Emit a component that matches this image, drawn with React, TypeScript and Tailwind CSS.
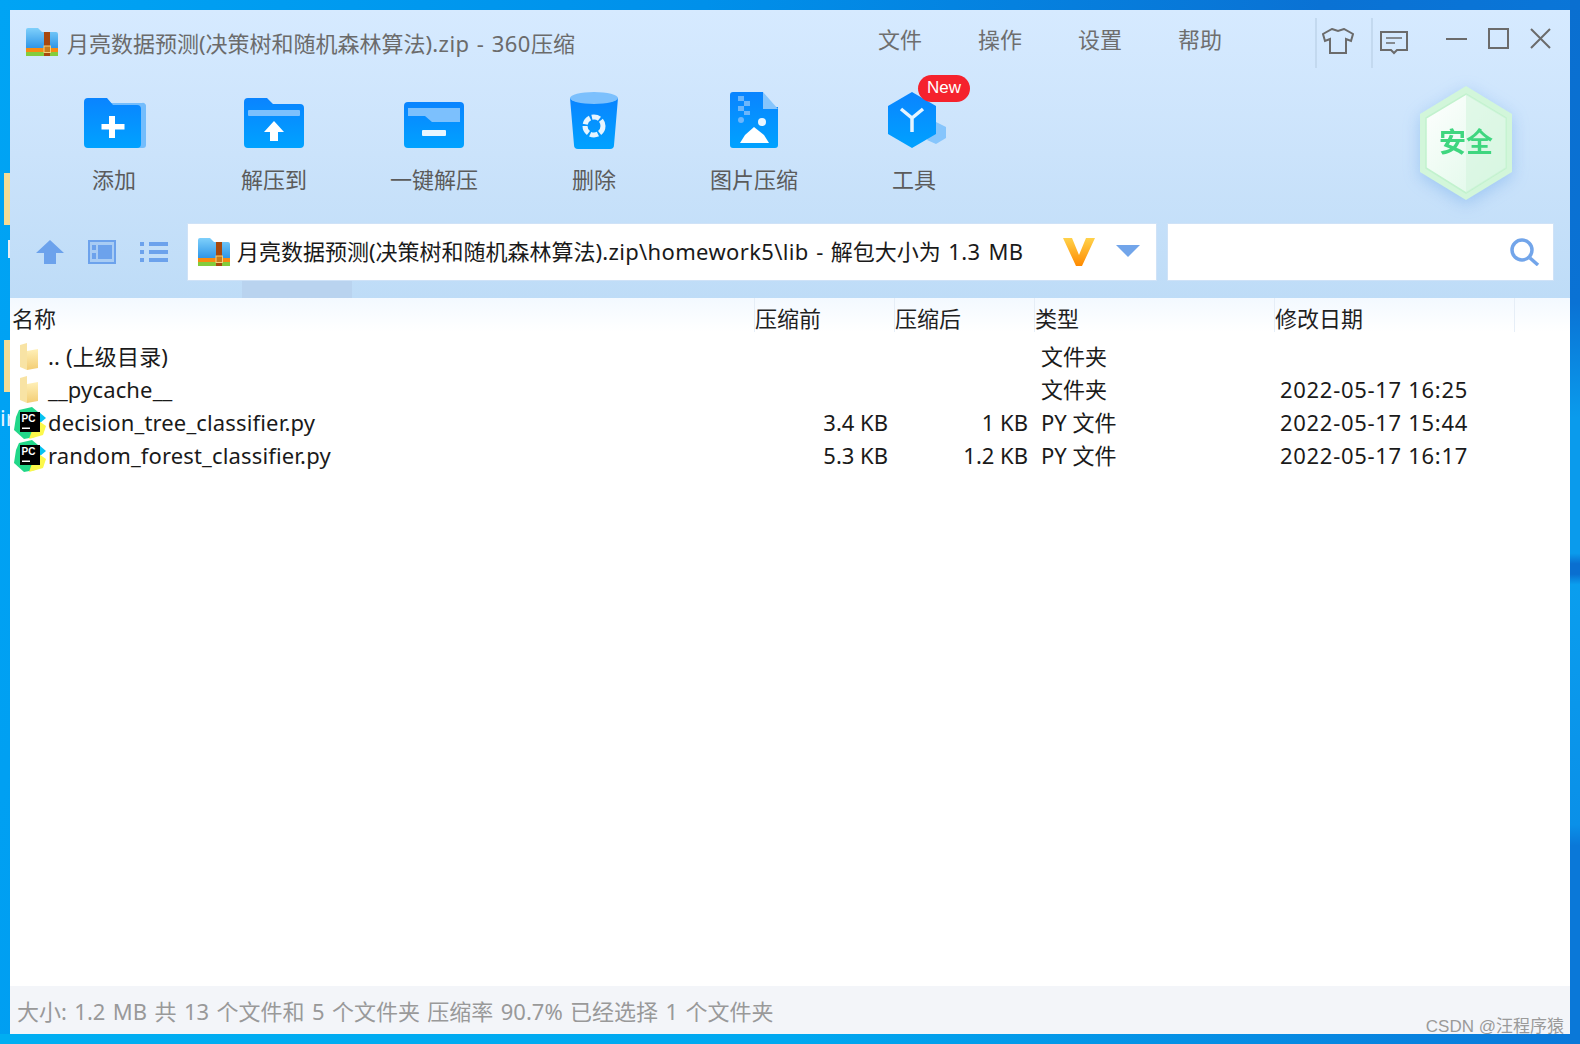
import React from "react";

const CJK = "font-['Segoe_UI','Noto_Sans','Noto_Sans_CJK_SC',sans-serif]";

function ArchiveIcon({ className, id }: { className: string; id: string }) {
  return (
    <svg viewBox="0 0 32 28" className={className}>
      <defs>
        <linearGradient id={id} x1="0" y1="0" x2="0" y2="1">
          <stop offset="0" stopColor="#7fd0fb" />
          <stop offset="1" stopColor="#2b93e6" />
        </linearGradient>
      </defs>
      <path d="M0 2a2 2 0 0 1 2-2h10l4 4h14a2 2 0 0 1 2 2v15H0z" fill={`url(#${id})`} />
      <rect y="20" width="32" height="4" fill="#f78a12" />
      <rect y="24" width="32" height="4" fill="#84cc3c" />
      <rect x="18" y="4" width="6" height="24" fill="#a8480d" />
      <rect x="18" y="18" width="6.5" height="6.5" fill="#c77a1c" stroke="#f4cf7c" strokeWidth="1" />
    </svg>
  );
}

function BlueDefs({ id }: { id: string }) {
  return (
    <defs>
      <linearGradient id={id} x1="0" y1="0" x2="0" y2="1">
        <stop offset="0" stopColor="#0a84ff" />
        <stop offset="1" stopColor="#00a2ff" />
      </linearGradient>
    </defs>
  );
}

function AddIcon() {
  return (
    <svg viewBox="0 0 62 50" className="w-[62px] h-[50px] ml-[1px]">
      <BlueDefs id="g-add" />
      <path d="M24 5h34a3 3 0 0 1 4 3v39a3 3 0 0 1-3 3H40z" fill="#74bdfc" />
      <path d="M0 4a4 4 0 0 1 4-4h19l6 7h24a4 4 0 0 1 4 4v35a4 4 0 0 1-4 4H4a4 4 0 0 1-4-4z" fill="url(#g-add)" />
      <path d="M25 18h6v8h9.500v5.500H31V40h-6v-8.500h-7.500V26H25z" fill="#fff" />
    </svg>
  );
}

function ExtractToIcon() {
  return (
    <svg viewBox="0 0 60 50" className="w-[60px] h-[50px]">
      <BlueDefs id="g-ext" />
      <path d="M0 4a4 4 0 0 1 4-4h19l6 6h27a4 4 0 0 1 4 4v36a4 4 0 0 1-4 4H4a4 4 0 0 1-4-4z" fill="url(#g-ext)" />
      <rect x="4" y="12" width="52" height="6" rx="1" fill="#7cc0fd" />
      <path d="M30 23l10 11h-6v9h-8v-9h-6z" fill="#fff" />
    </svg>
  );
}

function OneKeyIcon() {
  return (
    <svg viewBox="0 0 60 46" className="w-[60px] h-[46px]">
      <BlueDefs id="g-one" />
      <rect width="60" height="46" rx="4" fill="url(#g-one)" />
      <path d="M4 6h52v14H28l-7-6H4z" fill="#7cc0fd" />
      <rect x="18" y="28" width="24" height="6" rx="1" fill="#e9f6ff" />
    </svg>
  );
}

function TrashIcon() {
  return (
    <svg viewBox="0 0 48 58" className="w-[48px] h-[58px] -mb-[2px]">
      <BlueDefs id="g-tr" />
      <path d="M0 6l4 47a4 4 0 0 0 4 4h32a4 4 0 0 0 4-4l4-47z" fill="url(#g-tr)" />
      <ellipse cx="24" cy="6" rx="24" ry="6" fill="#7cc0fd" />
      <circle cx="24" cy="34" r="9" fill="none" stroke="#e6f5ff" strokeWidth="5" strokeDasharray="8 2" />
    </svg>
  );
}

function ImageZipIcon() {
  return (
    <svg viewBox="0 0 48 56" className="w-[48px] h-[56px]">
      <BlueDefs id="g-img" />
      <path d="M3 0h30v15h15v38a3 3 0 0 1-3 3H3a3 3 0 0 1-3-3V3a3 3 0 0 1 3-3z" fill="url(#g-img)" />
      <path d="M33 0l15 17H33z" fill="#86c5fc" />
      <path d="M8 4h6v5h6v5h-6v5h6v4h-6v-4H8v-5h6V9H8z" fill="#6cb6fb" />
      <circle cx="11" cy="28" r="3" fill="#6cb6fb" />
      <circle cx="32" cy="30" r="4" fill="#eaf6ff" />
      <path d="M10 51l5-8 9-8 10 8 5 8z" fill="#fff" />
    </svg>
  );
}

function ToolsIcon() {
  return (
    <svg viewBox="0 0 58 56" className="w-[58px] h-[56px] ml-[6px]">
      <BlueDefs id="g-tool" />
      <path d="M48 30l10 5v11l-10 6-9-4z" fill="#86c5fc" />
      <path d="M24 0l24 14v28L24 56 0 42V14z" fill="url(#g-tool)" />
      <path d="M13 17l11 9 11-9M24 26v14" fill="none" stroke="#e6f5ff" strokeWidth="3.500" />
    </svg>
  );
}

function Shield() {
  return (
    <svg viewBox="0 0 92 114" className="w-[92px] h-[114px] drop-shadow-[0_4px_8px_rgba(80,150,230,0.35)]">
      <defs>
        <linearGradient id="g-sh" x1="0" y1="0" x2="1" y2="1">
          <stop offset="0" stopColor="#ffffff" />
          <stop offset="1" stopColor="#dcf8e6" />
        </linearGradient>
      </defs>
      <path d="M46 0l46 28v58l-46 28L0 86V28z" fill="#d2f6da" />
      <path d="M46 8l40 24v50l-40 25L6 82V32z" fill="url(#g-sh)" stroke="#c2f2ce" strokeWidth="1.500" />
      <path d="M46 8l40 24v50l-40 25z" fill="#d4f5dd" fillOpacity="0.6" />
      <text x="46" y="66" textAnchor="middle" fontSize="27" fontWeight="700" fill="#3fd67f" fontFamily="'Noto Sans CJK SC',sans-serif">安全</text>
    </svg>
  );
}

function SmallFolder() {
  return (
    <svg viewBox="0 0 18 27" className="w-[18px] h-[27px] shrink-0">
      <defs>
        <linearGradient id="g-f" x1="0" y1="0" x2="0" y2="1">
          <stop offset="0" stopColor="#fff0b8" />
          <stop offset="1" stopColor="#f3cd74" />
        </linearGradient>
      </defs>
      <path d="M0 2l7-2v27l-7-3z" fill="#f8e3a4" />
      <path d="M7 8l11-2v19l-11 2z" fill="url(#g-f)" />
    </svg>
  );
}

function PyCharm() {
  return (
    <svg viewBox="0 0 32 32" className="w-[32px] h-[32px] shrink-0">
      <path d="M5 3l13-3 6 5-3 25-11 2-10-9 2-13z" fill="#21d789" />
      <path d="M25 5l7 6-6 5-3-6z" fill="#07c3f2" />
      <path d="M22 12l10 7-3 9-14 4z" fill="#fcf84a" />
      <rect x="6" y="5" width="20" height="20" fill="#000" />
      <text x="7.500" y="14.500" fontSize="10" fontWeight="700" fill="#fff" fontFamily="'Liberation Sans',sans-serif">PC</text>
      <rect x="8" y="20.500" width="8" height="1.500" fill="#fff" />
    </svg>
  );
}

const tools: [string, React.ReactNode][] = [
  ["添加", <AddIcon />],
  ["解压到", <ExtractToIcon />],
  ["一键解压", <OneKeyIcon />],
  ["删除", <TrashIcon />],
  ["图片压缩", <ImageZipIcon />],
  ["工具", <ToolsIcon />],
];

const rows = [
  { name: ".. (上级目录)", before: "", after: "", type: "文件夹", date: "", py: false },
  { name: "__pycache__", before: "", after: "", type: "文件夹", date: "2022-05-17 16:25", py: false },
  { name: "decision_tree_classifier.py", before: "3.4 KB", after: "1 KB", type: "PY 文件", date: "2022-05-17 15:44", py: true },
  { name: "random_forest_classifier.py", before: "5.3 KB", after: "1.2 KB", type: "PY 文件", date: "2022-05-17 16:17", py: true },
];

const COLS = "grid grid-cols-[744px_140px_140px_240px_240px_1fr]";

export default function App() {
  return (
    <div className={`relative w-[1580px] h-[1044px] overflow-hidden p-[10px] bg-[linear-gradient(100deg,#00a4f4_0%,#0090ea_40%,#0a72d4_75%,#0a78da_100%)] ${CJK}`}>
      {/* desktop items showing beside the window */}
      <div className="absolute left-[4px] top-[173px] w-[8px] h-[52px] bg-[#f6dc96]" />
      <div className="absolute left-[8px] top-[240px] w-[4px] h-[18px] bg-[#e8eef5]" />
      <div className="absolute left-[4px] top-[340px] w-[8px] h-[52px] bg-[#f6dc96]" />
      <div className="absolute left-[0px] top-[402px] text-[22px] leading-[30px] text-[#e8f4ff] w-[10px] overflow-hidden">ir</div>
      <div className="absolute left-0 bottom-0 w-full h-[10px] bg-[linear-gradient(90deg,#00aef2_0%,#00a8f0_50%,#0a78da_100%)]" />
      <div className="absolute right-0 top-0 w-[10px] h-[1044px] bg-[linear-gradient(180deg,#0a6fd0_0%,#0a72d4_29%,#0a9bec_40%,#0a9bec_53%,#0a6fd0_54%,#0a6fd0_55%,#0a9eee_56%,#0a90e8_79%,#0a78d8_81%,#0a78d8_100%)]" />

      <div className="relative flex flex-col w-[1560px] h-[1024px] bg-white">
        <div className="flex flex-col h-[288px] bg-[linear-gradient(180deg,#d6eaff_0%,#cbe3fb_50%,#bedcf7_100%)]">
          {/* title row */}
          <div className="flex h-[62px] shrink-0">
            <div className="flex w-[840px] pl-[16px] pt-[17px]">
              <ArchiveIcon className="w-[32px] h-[28px] shrink-0 mt-[1px]" id="g-arc1" />
              <div className="ml-[9px] text-[22px] leading-[32px] text-[#6b6b6b] whitespace-nowrap">
                月亮数据预测(决策树和随机森林算法)<span className="tracking-[0.5px] [word-spacing:1px]">.zip - 360</span>压缩
              </div>
            </div>
            <div className="flex w-[400px] pt-[13px]">
              {["文件", "操作", "设置", "帮助"].map((m) => (
                <div key={m} className="w-[100px] text-center text-[22px] leading-[32px] text-[#6e6e6e]">{m}</div>
              ))}
            </div>
            <div className="flex ml-[65px] mt-[8px] h-[50px]">
              <div className="pt-[10px] pl-[5px] w-[56px] border-l-2 border-[#c3d9ef]">
                <svg viewBox="0 0 32 26" className="w-[32px] h-[26px]" fill="none" stroke="#6b6b6b" strokeWidth="2">
                  <path d="M10 1l6 2 6-2 9 5-2 7-5-2v14H8V11l-5 2-2-7z" />
                </svg>
              </div>
              <div className="pt-[12px] pl-[7px] w-[56px] border-l-2 border-[#c3d9ef]">
                <svg viewBox="0 0 28 25" className="w-[28px] h-[25px]" fill="none" stroke="#6b6b6b" strokeWidth="2">
                  <path d="M1 2h26v18H17l-3 3-3-3H1z" />
                  <path d="M6 8h16M6 13h9" strokeWidth="1.500" />
                </svg>
              </div>
            </div>
            <div className="flex ml-[19px] mt-[18px] gap-[21px] items-start">
              <svg viewBox="0 0 21 21" className="w-[21px] h-[21px]" stroke="#6b6b6b" strokeWidth="2"><path d="M0 11h21" /></svg>
              <svg viewBox="0 0 21 21" className="w-[21px] h-[21px]" fill="none" stroke="#6b6b6b" strokeWidth="2"><path d="M1 1h19v19H1z" /></svg>
              <svg viewBox="0 0 21 21" className="w-[21px] h-[21px]" fill="none" stroke="#6b6b6b" strokeWidth="2"><path d="M1 1l19 19M20 1L1 20" /></svg>
            </div>
          </div>

          {/* toolbar */}
          <div className="flex h-[151px] shrink-0 pl-[24px]">
            {tools.map(([label, icon]) => (
              <div key={label} className="relative flex flex-col items-center w-[160px]">
                <div className="flex items-end justify-center h-[76px]">{icon}</div>
                <div className="mt-[15px] text-[22px] leading-[32px] text-[#5b5b5b] whitespace-nowrap">{label}</div>
                {label === "工具" && (
                  <div className="absolute left-[84px] top-[3px] w-[52px] h-[27px] rounded-full bg-[#f5222d] text-white text-[17px] leading-[26px] text-center font-['Liberation_Sans',sans-serif]">New</div>
                )}
              </div>
            ))}
            <div className="ml-[426px] mt-[14px]"><Shield /></div>
          </div>

          {/* address row */}
          <div className="flex items-center h-[58px] shrink-0">
            <div className="flex items-center w-[177px] pl-[26px] gap-[24px]">
              <svg viewBox="0 0 28 24" className="w-[28px] h-[24px]"><path d="M14 0l14 13h-8v11H8V13H0z" fill="#6ca2ec" /></svg>
              <svg viewBox="0 0 28 24" className="w-[28px] h-[24px]">
                <rect x="1" y="1" width="26" height="22" fill="#a8ccf4" stroke="#6ca2ec" strokeWidth="2" />
                <rect x="10" y="5" width="14" height="14" fill="#6ca2ec" />
                <rect x="4" y="5" width="4" height="5" fill="#6ca2ec" />
                <rect x="4" y="13" width="4" height="6" fill="#6ca2ec" />
              </svg>
              <svg viewBox="0 0 28 20" className="w-[28px] h-[20px]" fill="#6ca2ec">
                <rect width="4" height="4" /><rect y="8" width="4" height="4" /><rect y="16" width="4" height="4" />
                <rect x="9" width="19" height="4" /><rect x="9" y="8" width="19" height="4" /><rect x="9" y="16" width="19" height="4" />
              </svg>
            </div>
            <div className="flex items-center w-[970px] h-full bg-white pl-[10px] border border-[#cfe2f7]">
              <ArchiveIcon className="w-[32px] h-[32px] shrink-0" id="g-arc2" />
              <div className="ml-[7px] -mt-[3px] text-[22px] leading-[32px] text-[#1a1a1a] whitespace-nowrap w-[826px] [word-spacing:1.8px]">
                月亮数据预测(决策树和随机森林算法)<span className="tracking-[0.35px]">.zip\homework5\lib</span> - 解包大小为 <span className="tracking-[0.4px]">1.3 MB</span>
              </div>
              <svg viewBox="0 0 32 28" className="w-[32px] h-[28px] shrink-0">
                <defs>
                  <linearGradient id="g-v" x1="0" y1="0" x2="0" y2="1">
                    <stop offset="0" stopColor="#ffd24a" />
                    <stop offset="1" stopColor="#ff8a00" />
                  </linearGradient>
                </defs>
                <path d="M0 0h9l7 17 7-17h9L19 28h-6z" fill="url(#g-v)" />
              </svg>
              <svg viewBox="0 0 24 12" className="ml-[21px] w-[24px] h-[12px] shrink-0 -mt-[2px]"><path d="M0 0h24L12 12z" fill="#72a5ea" /></svg>
            </div>
            <div className="flex items-center justify-end ml-[10px] w-[387px] h-full bg-white border border-[#cfe2f7] pr-[13px]">
              <svg viewBox="0 0 30 28" className="w-[30px] h-[28px]" fill="none" stroke="#72a5ea" strokeWidth="3.500">
                <circle cx="12" cy="12" r="10" />
                <path d="M20 20l8 7" />
              </svg>
            </div>
          </div>

          {/* strip under address bar */}
          <div className="flex flex-1">
            <div className="ml-[232px] w-[110px] bg-[#b9d3ef]" />
          </div>
        </div>

        {/* list header */}
        <div className={`${COLS} h-[34px] shrink-0 bg-[linear-gradient(180deg,#f3f9ff_0%,#ffffff_100%)] text-[22px] leading-[40px] text-[#1f1f1f]`}>
          <div className="pl-[2px]">名称</div>
          {["压缩前", "压缩后", "类型", "修改日期", ""].map((h) => (
            <div key={h} className="border-l border-[#e6eef7] h-[34px] whitespace-nowrap">{h}</div>
          ))}
        </div>

        {/* rows */}
        <div className="flex-1 pt-[8px]">
          {rows.map((r) => (
            <div key={r.name} className={`${COLS} h-[33px] text-[22px] leading-[33px] text-[#1a1a1a]`}>
              <div className="flex items-center whitespace-nowrap">
                <div className={`flex justify-center w-[38px] shrink-0 ${r.py ? "pl-[2px]" : "pr-[1px]"}`}>{r.py ? <PyCharm /> : <SmallFolder />}</div>
                <span className="tracking-[0.15px]">{r.name}</span>
              </div>
              <div className="text-right pr-[6px]">{r.before}</div>
              <div className="text-right pr-[6px]">{r.after}</div>
              <div className="pl-[7px]">{r.type}</div>
              <div className="pl-[6px] tracking-[0.7px]">{r.date}</div>
            </div>
          ))}
        </div>

        {/* status bar */}
        <div className="h-[48px] shrink-0 bg-[#f3f5f9] pl-[7px] text-[22px] leading-[50px] text-[#999999] whitespace-nowrap [word-spacing:1.7px]">
          大小: 1.2 MB 共 13 个文件和 5 个文件夹 压缩率 90.7% 已经选择 1 个文件夹
        </div>
        <div className="absolute right-[6px] bottom-0 text-[17px] leading-[15px] text-[#9a9a9a] whitespace-nowrap font-['Liberation_Sans','Noto_Sans_CJK_SC',sans-serif]">CSDN @汪程序猿</div>
      </div>
    </div>
  );
}
